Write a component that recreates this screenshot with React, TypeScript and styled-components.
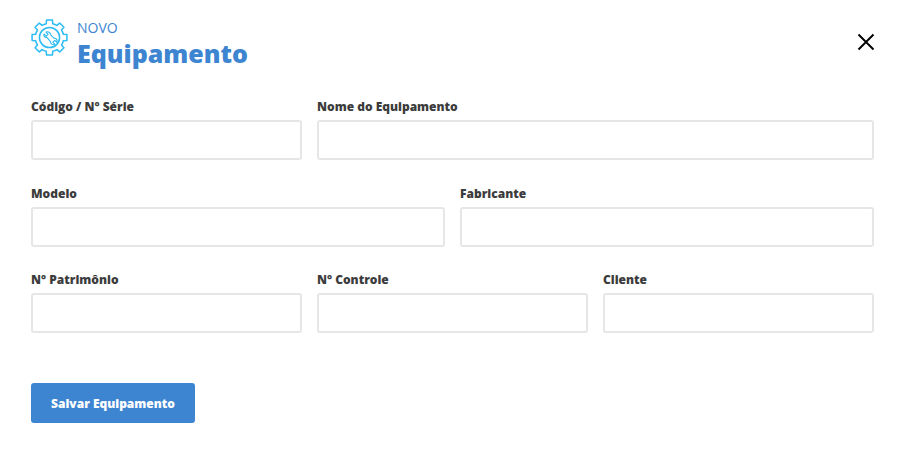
import { createGlobalStyle } from "styled-components"
import styled from "styled-components"

const GlobalStyle = createGlobalStyle`
    html, body {
        margin: 0;
        padding: 0;
        background: #fff;
        font-family: "Open Sans", "Liberation Sans", sans-serif;
    }
`

const fields = [
    { label: "Código / N° Série", span: 2 },
    { label: "Nome do Equipamento", span: 4 },
    { label: "Modelo", span: 3 },
    { label: "Fabricante", span: 3 },
    { label: "N° Patrimônio", span: 2 },
    { label: "N° Controle", span: 2 },
    { label: "Cliente", span: 2 },
]

function GearIcon() {
    const teeth = []
    const r1 = 13.8
    const r2 = 17.2
    for (let i = 0; i < 8; i++) {
        const a = (i * 45 * Math.PI) / 180
        const w = 0.23
        const w2 = 0.17
        const p = (r: number, t: number) =>
            (18 + r * Math.cos(t)).toFixed(2) + " " + (18 + r * Math.sin(t)).toFixed(2)
        teeth.push(
            (i === 0 ? "M" : "L") + p(r1, a - w) +
                " L" + p(r2, a - w2) +
                " L" + p(r2, a + w2) +
                " L" + p(r1, a + w) +
                " A" + r1 + " " + r1 + " 0 0 1 " + p(r1, a + Math.PI / 4 - w)
        )
    }
    return (
        <svg width="37" height="37" viewBox="0 0 36 36" fill="none" stroke="#2ebcf5" strokeWidth="1.5" strokeLinejoin="round" strokeLinecap="round">
            <path d={teeth.join(" ") + " Z"} />
            <circle cx="18" cy="18" r="9.8" />
            <path d="M12.6 14.6 L14.8 16.6 L16.6 15 L14.6 12.7 C16.6 11.8 19 13 19.2 15.4 L22.6 18.8 C24.8 18.6 26 20.6 25.2 22.6 L23.2 20.8 L21.2 22.6 L23.2 24.8 C21 25.6 18.8 24 18.8 21.8 L15.4 17.8 C13.4 18.2 12 16.6 12.6 14.6 Z" strokeWidth="1.1" />
        </svg>
    )
}

export default function App() {
    return (
        <Page>
            <GlobalStyle />
            <Header>
                <TitleBlock>
                    <GearIcon />
                    <Titles>
                        <Small>NOVO</Small>
                        <Big>Equipamento</Big>
                    </Titles>
                </TitleBlock>
                <Close aria-label="Fechar">
                    <svg width="18" height="18" viewBox="0 0 18 18" stroke="#000" strokeWidth="1.9" fill="none">
                        <path d="M1.5 1.5 L16.5 16.5 M16.5 1.5 L1.5 16.5" />
                    </svg>
                </Close>
            </Header>
            <Form>
                {fields.map((f) => (
                    <Field key={f.label} $span={f.span}>
                        <Label>{f.label}</Label>
                        <Input type="text" />
                    </Field>
                ))}
            </Form>
            <Save type="button">Salvar Equipamento</Save>
        </Page>
    )
}

const Page = styled.div`
    width: 920px;
    height: 454px;
    box-sizing: border-box;
    padding: 19px 46px 0 31px;
    overflow: hidden;
`
const Header = styled.div`
    display: flex;
    justify-content: space-between;
    align-items: flex-start;
    height: 79px;
`
const TitleBlock = styled.div`
    display: flex;
    align-items: flex-start;
    gap: 9px;
`
const Titles = styled.div`
    display: flex;
    flex-direction: column;
`
const Small = styled.span`
    font-size: 14px;
    line-height: 18px;
    color: #3d85d1;
`
const Big = styled.span`
    font-size: 25px;
    line-height: 32px;
    font-weight: 800;
    color: #3d85d1;
`
const Close = styled.button`
    border: 0;
    background: none;
    padding: 0;
    margin: 14px -1px 0 0;
    width: 18px;
    height: 18px;
    display: block;
    line-height: 0;
`
const Form = styled.div`
    display: grid;
    grid-template-columns: repeat(6, 1fr);
    column-gap: 15px;
    row-gap: 24.5px;
`
const Field = styled.div<{ $span: number }>`
    grid-column: span ${(p) => p.$span};
    display: flex;
    flex-direction: column;
    gap: 5px;
`
const Label = styled.label`
    font-size: 12px;
    line-height: 17px;
    font-weight: 800;
    color: #3c3c3c;
`
const Input = styled.input`
    box-sizing: border-box;
    width: 100%;
    height: 40px;
    background: #fff;
    border: 2px solid #e6e6e6;
    border-radius: 3px;
    outline: none;
`
const Save = styled.button`
    display: block;
    margin-top: 50px;
    width: 164px;
    height: 40px;
    border: 0;
    border-radius: 3px;
    background: #3d85d1;
    color: #fff;
    font-family: inherit;
    font-size: 12px;
    font-weight: 800;
`
